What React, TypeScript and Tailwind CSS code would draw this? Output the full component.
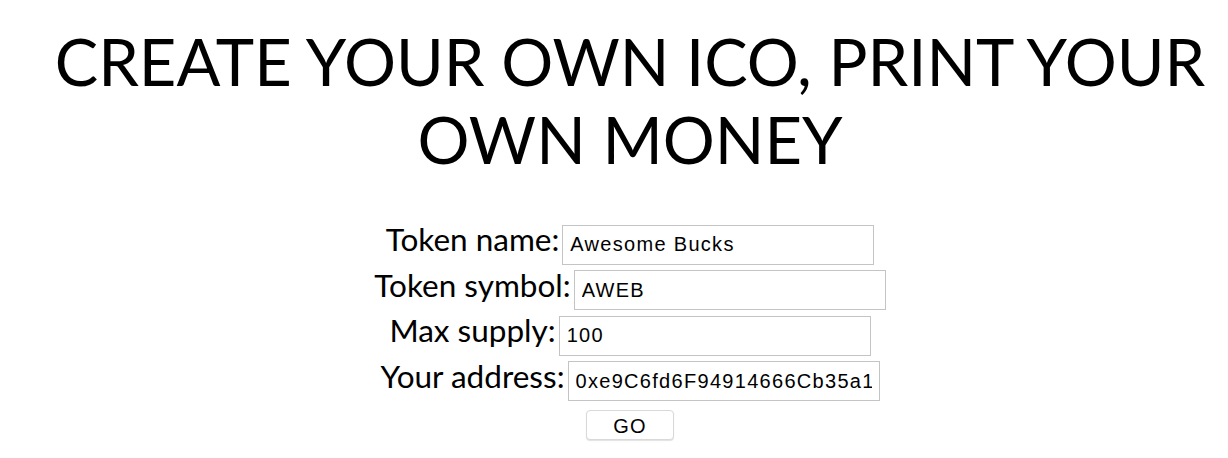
import React from 'react';

const fields = [
  { label: 'Token name:', value: 'Awesome Bucks' },
  { label: 'Token symbol:', value: 'AWEB' },
  { label: 'Max supply:', value: '100' },
  { label: 'Your address:', value: '0xe9C6fd6F94914666Cb35a1C3f5e8b2D7A04e6c91' },
];

const App: React.FC = () => {
  return (
    <div className="min-h-screen bg-white pl-8 pt-[22px] text-center text-black font-['Lato',sans-serif]">
      <h1 className="text-[65px] leading-[78px] font-normal uppercase">
        Create your own ICO, print your own money
      </h1>

      <form className="mt-[46px] flex flex-col items-center gap-[5px]" onSubmit={(e) => e.preventDefault()}>
        {fields.map((f) => (
          <div key={f.label} className="flex items-baseline gap-[3px]">
            <label className="text-[31.5px] leading-[30px]">{f.label}</label>
            <input
              type="text"
              defaultValue={f.value}
              className="h-[40px] w-[312px] border border-[#c4c4c4] bg-white px-[7px] text-[20px] tracking-[1.3px] text-black outline-none font-['Liberation_Sans',Arial,sans-serif]"
            />
          </div>
        ))}
        <button
          type="submit"
          className="mt-[4px] h-[30px] w-[88px] rounded-[4px] border border-[#d9d9d9] bg-white text-[20px] tracking-[1.3px] shadow-[0_1px_1px_rgba(0,0,0,0.12)] font-['Liberation_Sans',Arial,sans-serif]"
        >
          GO
        </button>
      </form>
    </div>
  );
};

export default App;
